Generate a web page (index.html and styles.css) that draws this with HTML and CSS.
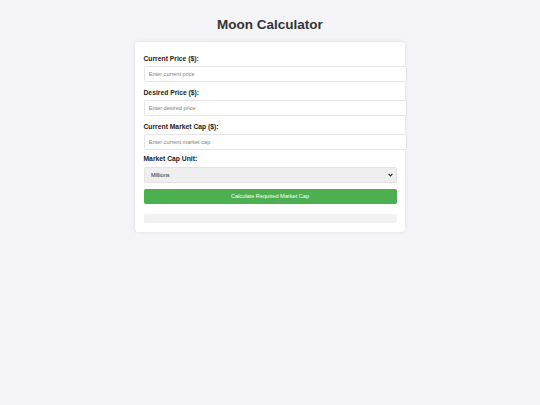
FILE: index.html
```html
<!DOCTYPE html>
<html lang="en">
<head>
<meta charset="utf-8">
<title>Moon Calculator</title>
<link rel="stylesheet" href="styles.css">
</head>
<body>
<h1 class="title">Moon Calculator</h1>
<div class="card">
  <label class="label label-first" for="cp">Current Price ($):</label>
  <input class="field" id="cp" type="number" placeholder="Enter current price">
  <label class="label" for="dp">Desired Price ($):</label>
  <input class="field" id="dp" type="number" placeholder="Enter desired price">
  <label class="label" for="mc">Current Market Cap ($):</label>
  <input class="field" id="mc" type="number" placeholder="Enter current market cap">
  <label class="label label-unit" for="unit">Market Cap Unit:</label>
  <div class="select-wrap">
    <select class="select" id="unit">
      <option>Millions</option>
      <option>Billions</option>
      <option>Trillions</option>
    </select>
    <svg class="chevron" width="5" height="4" viewBox="0 0 5 4"><path d="M0.6 0.9 L2.5 2.9 L4.4 0.9" fill="none" stroke="#222" stroke-width="1.1"/></svg>
  </div>
  <button class="btn" type="button">Calculate Required Market Cap</button>
  <div class="result"></div>
</div>
</body>
</html>
```

FILE: styles.css
```css
html, body {
  margin: 0;
}
body {
  padding: 8.4px;
  background: #f4f4f9;
  font-family: "Liberation Sans", Arial, sans-serif;
}
.title {
  margin: 9px 0;
  font-size: 13.5px;
  font-weight: bold;
  color: #333;
  text-align: center;
  line-height: 15.5px;
}
.card {
  max-width: 253px;
  margin: 0 auto;
  padding: 8.4px 8.4px 9px;
  background: #fff;
  border-radius: 3.4px;
  box-shadow: 0 0 4px rgba(0, 0, 0, 0.1);
}
.label {
  display: block;
  margin: 7.6px 0 2.6px;
  font-size: 6.75px;
  line-height: 7.8px;
  font-weight: bold;
  color: #1a1a1a;
}
.label-first {
  margin-top: 5.2px;
}
.label-unit {
  margin-top: 5.5px;
  margin-bottom: 3.4px;
}
.field {
  display: block;
  box-sizing: content-box;
  width: 100%;
  height: 14px;
  margin: 0;
  padding: 0 4.2px;
  border: 1px solid #e6e6e6;
  border-radius: 1.7px;
  font-family: "Liberation Sans", Arial, sans-serif;
  font-size: 5.6px;
  color: #222;
  background: #fff;
  outline: none;
  -moz-appearance: textfield;
}
.field::-webkit-outer-spin-button,
.field::-webkit-inner-spin-button {
  -webkit-appearance: none;
  margin: 0;
}
.field::placeholder {
  color: #808080;
}
.select-wrap {
  position: relative;
  margin-bottom: 6px;
}
.select {
  display: block;
  box-sizing: border-box;
  width: 100%;
  height: 16px;
  margin: 0;
  padding: 0 6.4px;
  border: 1px solid #e2e2e2;
  border-radius: 1.7px;
  background: #efefef;
  font-family: "Liberation Sans", Arial, sans-serif;
  font-size: 5.6px;
  color: #222;
  -webkit-appearance: none;
  appearance: none;
}
.chevron {
  position: absolute;
  right: 4px;
  top: 6px;
}
.btn {
  display: block;
  box-sizing: border-box;
  width: 100%;
  height: 15.5px;
  margin: 0;
  padding: 0;
  border: none;
  border-radius: 1.7px;
  background: #4caf50;
  color: #fff;
  font-family: "Liberation Sans", Arial, sans-serif;
  font-size: 5.6px;
}
.result {
  margin-top: 10.3px;
  height: 9px;
  background: #f2f2f2;
  border-radius: 1.7px;
}
```
